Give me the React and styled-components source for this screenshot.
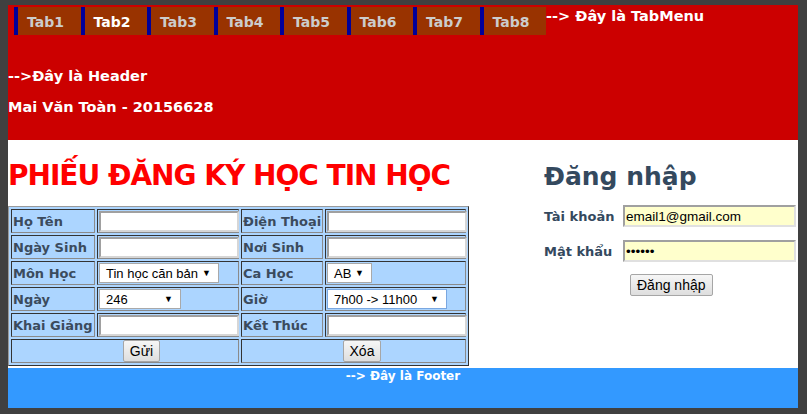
import React from 'react';
import styled, { createGlobalStyle } from 'styled-components';

const GlobalStyle = createGlobalStyle`
  html, body {
    background: #404040;
  }
  body {
    margin: 5px 9px 6px 8px;
    font-family: 'DejaVu Sans', Verdana, sans-serif;
  }
`;

const tabs = ['Tab1', 'Tab2', 'Tab3', 'Tab4', 'Tab5', 'Tab6', 'Tab7', 'Tab8'];

const App = () => {
  return (
    <Page>
      <GlobalStyle />

      {/* header + tab menu */}
      <Header>
        <TabRow>
          {tabs.map((t) => (
            <Tab key={t} $active={t === 'Tab2'}>
              {t}
            </Tab>
          ))}
          <TabNote>--&gt; Đây là TabMenu</TabNote>
        </TabRow>
        <HeaderLine>--&gt;Đây là Header</HeaderLine>
        <HeaderLine>Mai Văn Toàn - 20156628</HeaderLine>
      </Header>

      <Main>
        {/* registration form */}
        <FormSection>
          <Title>PHIẾU ĐĂNG KÝ HỌC TIN HỌC</Title>
          <FormTable>
            <colgroup>
              <col style={{ width: 84 }} />
              <col style={{ width: 142 }} />
              <col style={{ width: 82 }} />
              <col style={{ width: 141 }} />
            </colgroup>
            <tbody>
              <tr>
                <Label>Họ Tên</Label>
                <Field><TextInput type='text' /></Field>
                <Label>Điện Thoại</Label>
                <Field><TextInput type='text' /></Field>
              </tr>
              <tr>
                <Label>Ngày Sinh</Label>
                <Field><TextInput type='text' /></Field>
                <Label>Nơi Sinh</Label>
                <Field><TextInput type='text' /></Field>
              </tr>
              <tr>
                <Label>Môn Học</Label>
                <Field>
                  <Select $w={120}>
                    <span>Tin học căn bản</span>
                    <Arrow>▼</Arrow>
                  </Select>
                </Field>
                <Label>Ca Học</Label>
                <Field>
                  <Select $w={45}>
                    <span>AB</span>
                    <Arrow>▼</Arrow>
                  </Select>
                </Field>
              </tr>
              <tr>
                <Label>Ngày</Label>
                <Field>
                  <Select $w={82}>
                    <span>246</span>
                    <Arrow>▼</Arrow>
                  </Select>
                </Field>
                <Label>Giờ</Label>
                <Field>
                  <Select $w={120} $focus>
                    <span>7h00 -&gt; 11h00</span>
                    <Arrow>▼</Arrow>
                  </Select>
                </Field>
              </tr>
              <tr>
                <Label>Khai Giảng</Label>
                <Field><TextInput type='text' /></Field>
                <Label>Kết Thúc</Label>
                <Field><TextInput type='text' /></Field>
              </tr>
              <tr>
                <ButtonCell colSpan={2} $shift={34}>
                  <Button>Gửi</Button>
                </ButtonCell>
                <ButtonCell colSpan={2} $shift={18}>
                  <Button>Xóa</Button>
                </ButtonCell>
              </tr>
            </tbody>
          </FormTable>
        </FormSection>

        {/* login */}
        <LoginSection>
          <LoginTitle>Đăng nhập</LoginTitle>
          <LoginGrid>
            <LoginLabel>Tài khoản</LoginLabel>
            <LoginInput type='text' defaultValue='email1@gmail.com' />
            <LoginLabel>Mật khẩu</LoginLabel>
            <LoginInput type='password' defaultValue='123456' />
          </LoginGrid>
          <LoginButtonRow>
            <Button>Đăng nhập</Button>
          </LoginButtonRow>
        </LoginSection>
      </Main>

      <Footer>--&gt; Đây là Footer</Footer>
    </Page>
  );
};

export default App;

const Page = styled.div`
  width: 790px;
  background: #ffffff;
`;

const Header = styled.div`
  background: #cc0000;
  height: 135px;
  padding-top: 2px;
  box-sizing: border-box;
  overflow: hidden;
`;

const TabRow = styled.div`
  display: flex;
  align-items: flex-start;
  padding-left: 6px;
`;

const Tab = styled.div`
  width: 62.5px;
  height: 28px;
  box-sizing: content-box;
  border-left: 4px solid #000099;
  background: #993300;
  color: ${(p) => (p.$active ? '#ffffff' : '#cccccc')};
  font-weight: bold;
  font-size: 14px;
  line-height: 30px;
  text-indent: 9px;
  white-space: nowrap;
`;

const TabNote = styled.div`
  color: #ffffff;
  font-weight: bold;
  font-size: 14.5px;
  line-height: 18px;
  white-space: nowrap;
`;

const HeaderLine = styled.div`
  color: #ffffff;
  font-weight: bold;
  font-size: 14.5px;
  line-height: 18px;
  margin-top: 13px;
  &:nth-child(2) {
    margin-top: 32px;
  }
`;

const Main = styled.div`
  display: flex;
  justify-content: space-between;
  height: 228px;
`;

const FormSection = styled.div`
  width: 461px;
`;

const Title = styled.h1`
  margin: 18px 0 12px;
  color: #ff0000;
  font-size: 28px;
  letter-spacing: -1px;
  line-height: 36px;
  font-weight: bold;
  white-space: nowrap;
`;

const FormTable = styled.table`
  width: 461px;
  table-layout: fixed;
  border-collapse: separate;
  border-spacing: 2px;
  border: 1px solid;
  border-color: #9a9a9a #333333 #333333 #9a9a9a;
  background: #acd5ff;
`;

const Cell = styled.td`
  height: 22px;
  padding: 0 1px;
  border: 1px solid;
  border-color: #333333 #8a8a8a #8a8a8a #333333;
  background: #acd5ff;
`;

const Label = styled(Cell)`
  color: #3b4b5d;
  font-weight: bold;
  font-size: 13px;
  white-space: nowrap;
  overflow: hidden;
`;

const Field = styled(Cell)``;

const ButtonCell = styled(Cell)`
  text-align: center;
  padding-left: ${(p) => p.$shift || 0}px;
`;

const TextInput = styled.input`
  display: block;
  width: 140px;
  height: 21px;
  box-sizing: border-box;
  margin: 0;
  border: 2px solid;
  border-color: #a0a0a0 #d6d6d6 #d6d6d6 #a0a0a0;
  background: #ffffff;
  outline: none;
`;

const Select = styled.div`
  display: flex;
  align-items: center;
  justify-content: space-between;
  width: ${(p) => p.$w}px;
  height: 20px;
  box-sizing: border-box;
  padding: 0 7px 0 6px;
  border: 1px solid ${(p) => (p.$focus ? '#7aa7e0' : '#a9a9a9')};
  background: #ffffff;
  color: #000000;
  font-family: 'Liberation Sans', Arial, sans-serif;
  font-size: 13px;
  white-space: nowrap;
`;

const Arrow = styled.span`
  font-size: 9px;
  color: #000000;
`;

const Button = styled.button`
  height: 22px;
  padding: 0 6px;
  border: 1px solid #a6a6a6;
  border-radius: 2px;
  background: linear-gradient(#f6f6f6, #dedede);
  color: #000000;
  font-family: 'Liberation Sans', Arial, sans-serif;
  font-size: 14px;
`;

const LoginSection = styled.div`
  width: 254px;
`;

const LoginTitle = styled.h2`
  margin: 22px 0 13px;
  color: #34495e;
  font-size: 25px;
  line-height: 30px;
  font-weight: bold;
`;

const LoginGrid = styled.div`
  display: grid;
  grid-template-columns: 79px 173px;
  row-gap: 13px;
  align-items: center;
`;

const LoginLabel = styled.div`
  color: #34495e;
  font-size: 13px;
  font-weight: bold;
  white-space: nowrap;
`;

const LoginInput = styled.input`
  width: 173px;
  height: 22px;
  box-sizing: border-box;
  margin: 0;
  border: 2px solid;
  border-color: #a0a0a0 #e0e0e0 #e0e0e0 #a0a0a0;
  background: #ffffcc;
  font-family: 'Liberation Sans', Arial, sans-serif;
  font-size: 13.5px;
  padding: 0 1px;
  outline: none;
`;

const LoginButtonRow = styled.div`
  padding: 12px 0 0 86px;
`;

const Footer = styled.div`
  height: 40px;
  background: #3399ff;
  color: #ffffff;
  font-weight: bold;
  font-size: 12px;
  line-height: 16px;
  text-align: center;
`;
